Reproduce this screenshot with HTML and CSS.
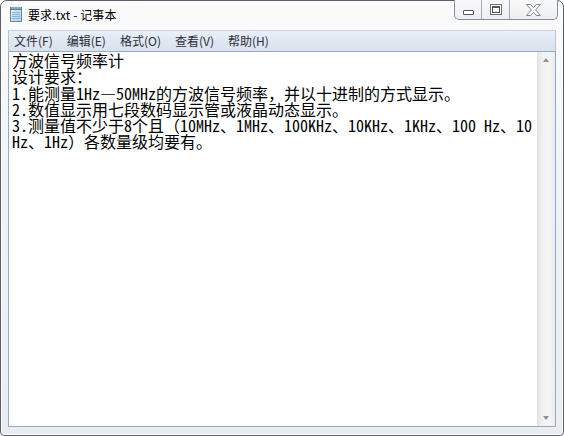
FILE: index.html
```html
<!DOCTYPE html>
<html lang="zh-CN">
<head>
<meta charset="utf-8">
<title>要求.txt - 记事本</title>
<link rel="stylesheet" href="styles.css">
</head>
<body>
<div class="window">
  <div class="titlebar">
    <svg class="app-icon" width="16" height="17" viewBox="0 0 16 17">
      <defs>
        <linearGradient id="pg" x1="0" y1="0" x2="1" y2="1">
          <stop offset="0" stop-color="#e9f4fc"/>
          <stop offset="1" stop-color="#a9cbe8"/>
        </linearGradient>
      </defs>
      <path d="M2.5 2.5 H13.5 V15.5 H2.5 Z" fill="url(#pg)" stroke="#5f88ad"/>
      <path d="M4 6.5 H12 M4 8.5 H12 M4 10.5 H12 M4 12.5 H12" stroke="#8fb3d3" stroke-width="1"/>
      <rect x="2" y="1" width="12" height="3" fill="#4f7fb0"/>
      <path d="M4 0.5 V3 M6 0.5 V3 M8 0.5 V3 M10 0.5 V3 M12 0.5 V3" stroke="#dce9f5" stroke-width="0.8"/>
    </svg>
    <span class="title">要求.txt - 记事本</span>
    <div class="caption">
      <div class="cbtn cmin"><span class="min-glyph"></span></div>
      <div class="cbtn cmax"><span class="max-glyph"></span></div>
      <div class="cbtn cclose">
        <svg width="17" height="14" viewBox="0 0 17 14">
          <path d="M1.5 1.5 H5.5 L8.5 4.6 L11.5 1.5 H15.5 L10.6 7 L15.5 12.5 H11.5 L8.5 9.4 L5.5 12.5 H1.5 L6.4 7 Z" fill="#fcfcfc" stroke="#80878f" stroke-width="1" stroke-linejoin="round"/>
        </svg>
      </div>
    </div>
  </div>
  <div class="menubar">
    <span class="menu-item">文件(F)</span>
    <span class="menu-item">编辑(E)</span>
    <span class="menu-item">格式(O)</span>
    <span class="menu-item">查看(V)</span>
    <span class="menu-item">帮助(H)</span>
  </div>
  <div class="editor">
    <div class="text">方波信号频率计
设计要求：
1.能测量1Hz—50MHz的方波信号频率，并以十进制的方式显示。
2.数值显示用七段数码显示管或液晶动态显示。
3.测量值不少于8个且（10MHz、1MHz、100KHz、10KHz、1KHz、100 Hz、10
Hz、1Hz）各数量级均要有。</div>
    <div class="scrollbar">
      <div class="arrow up"></div>
      <div class="track"></div>
      <div class="arrow down"></div>
    </div>
  </div>
</div>
</body>
</html>
```
FILE: styles.css
```css
html, body {
  margin: 0;
  padding: 0;
  background: #ffffff;
}

.window {
  position: relative;
  width: 564px;
  height: 436px;
  box-sizing: border-box;
  border: 1px solid #5c6066;
  border-radius: 7px 7px 4px 4px;
  background: linear-gradient(180deg, #fbfbfc 0%, #f1f3f6 40%, #e9edf2 100%);
  box-shadow: inset 0 0 0 1px #ffffff;
  padding: 0 7px 8px 7px;
  display: flex;
  flex-direction: column;
  font-family: "Noto Sans CJK SC", "Liberation Sans", sans-serif;
}

.titlebar {
  height: 29px;
  display: flex;
  align-items: center;
  gap: 4px;
  padding-left: 0;
}

.app-icon {
  margin-top: -2px;
  flex: none;
}

.title {
  font-size: 12px;
  color: #000000;
  margin-top: -2px;
  letter-spacing: 0.1px;
}

.caption {
  position: absolute;
  top: -1px;
  right: 5px;
  display: flex;
  height: 19px;
  border: 1px solid #8a8f96;
  border-top: none;
  border-radius: 0 0 5px 5px;
  overflow: hidden;
  background: linear-gradient(180deg, #fafafa 0%, #eceef1 100%);
}

.cbtn {
  height: 19px;
  display: flex;
  align-items: center;
  justify-content: center;
}

.cmin {
  width: 26px;
  border-right: 1px solid #a6abb1;
}

.cmax {
  width: 27px;
  border-right: 1px solid #a6abb1;
}

.cclose {
  width: 47px;
}

.min-glyph {
  display: block;
  width: 9px;
  height: 3px;
  border: 1px solid #50575f;
  background: #ffffff;
  border-radius: 1px;
  margin-top: 6px;
}

.max-glyph {
  display: block;
  width: 6px;
  height: 4px;
  border: 1px solid #50575f;
  border-top-width: 2px;
  background: #ffffff;
  margin-top: -1px;
  box-shadow: 0 0 0 1px #ffffff, 0 0 0 2px #6a7079;
}

.menubar {
  height: 20px;
  display: flex;
  align-items: center;
  padding-left: 0;
  background: linear-gradient(180deg, #eaf0f8 0%, #dfe7f2 50%, #d9e2ef 100%);
  border-left: 1px solid #b9c3cf;
  border-right: 1px solid #b9c3cf;
  border-top: 1px solid #c7d0db;
}

.menu-item {
  font-size: 12px;
  color: #2b2f36;
  padding: 0 6px 0 5px;
  margin-right: 3px;
  line-height: 18px;
}

.editor {
  flex: 1;
  display: flex;
  min-height: 0;
  border: 1px solid #91abc8;
  background: #ffffff;
}

.text {
  flex: 1;
  padding: 0 3px;
  white-space: pre;
  font-family: "Noto Sans Mono CJK SC", "Noto Sans CJK SC", "Liberation Mono", monospace;
  font-size: 16px;
  line-height: 16.3px;
  color: #000000;
}

.scrollbar {
  width: 17px;
  display: flex;
  flex-direction: column;
  background: linear-gradient(90deg, #e6e6e6 0%, #f2f2f2 30%, #f4f4f4 70%, #eaeaea 100%);
  border-left: 1px solid #e2e2e2;
}

.arrow {
  height: 17px;
  position: relative;
}

.track {
  flex: 1;
}

.arrow.up::after,
.arrow.down::after {
  content: "";
  position: absolute;
  left: 5px;
  width: 0;
  height: 0;
  border-left: 3.5px solid transparent;
  border-right: 3.5px solid transparent;
}

.arrow.up::after {
  top: 6px;
  border-bottom: 4px solid #8c8f94;
}

.arrow.down::after {
  top: 7px;
  border-top: 4px solid #8c8f94;
}
```
